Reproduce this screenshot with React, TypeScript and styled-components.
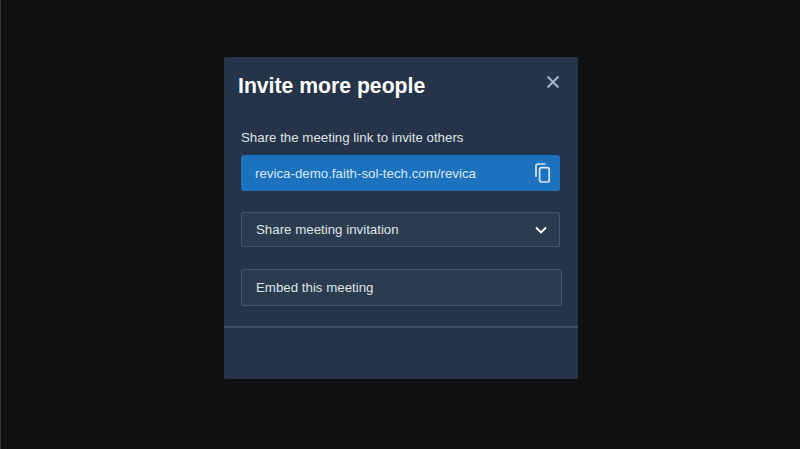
import React from "react";
import styled, { createGlobalStyle } from "styled-components";

const Global = createGlobalStyle`
  html, body { margin: 0; padding: 0; height: 100%; background: #111111; }
  #root { height: 100%; }
`;

const Page = styled.div`
  box-sizing: border-box;
  width: 800px;
  height: 449px;
  overflow: hidden;
  padding: 57px 0 0 223px;
  background: #111111;
  border-left: 1px solid #3a3a3a;
  font-family: "Liberation Sans", Arial, sans-serif;
`;

const Dialog = styled.div`
  box-sizing: border-box;
  width: 354px;
  height: 322px;
  background: #253448;
  border-radius: 2px;
  display: flex;
  flex-direction: column;
`;

const Header = styled.div`
  display: flex;
  justify-content: space-between;
  align-items: flex-start;
  height: 73px;
  padding: 16px 18px 0 14px;
  box-sizing: border-box;
`;

const Title = styled.h1`
  margin: 0;
  font-size: 21.2px;
  line-height: 26px;
  font-weight: 700;
  color: #ffffff;
`;

const Close = styled.button`
  display: flex;
  border: 0;
  padding: 0;
  background: none;
  color: #a5b3c6;
`;

const Body = styled.div`
  flex: 1;
  display: flex;
  flex-direction: column;
  padding: 0 16px 0 17px;
`;

const Label = styled.div`
  font-size: 13.3px;
  line-height: 16px;
  color: #dfe3e8;
  margin-bottom: 9px;
`;

const LinkBox = styled.div`
  box-sizing: border-box;
  height: 36px;
  width: 319px;
  display: flex;
  align-items: center;
  justify-content: space-between;
  padding: 0 9px 0 14px;
  background: #1c72bd;
  border-radius: 3px;
  font-size: 13.3px;
  color: #d9e7f4;
`;

const Row = styled.div<{ $w: number; $h: number; $mt: number }>`
  box-sizing: border-box;
  width: ${(p) => p.$w}px;
  height: ${(p) => p.$h}px;
  margin-top: ${(p) => p.$mt}px;
  display: flex;
  align-items: center;
  justify-content: space-between;
  padding: 0 12px 0 14px;
  background: #2b3c4e;
  border: 1px solid #43566a;
  border-radius: 2px;
  font-size: 13.3px;
  color: #dfe3e8;
`;

const Footer = styled.div`
  height: 53px;
  box-sizing: border-box;
  border-top: 2px solid #3e5062;
`;

export default function App() {
  return (
    <>
      <Global />
      <Page>
        <Dialog>
          <Header>
            <Title>Invite more people</Title>
            <Close aria-label="Close">
              <svg width="14" height="18" viewBox="0 0 14 18" fill="none" stroke="currentColor" strokeWidth="2">
                <path d="M1.5 3.5 L12.5 14.5 M12.5 3.5 L1.5 14.5" />
              </svg>
            </Close>
          </Header>
          <Body>
            <Label>Share the meeting link to invite others</Label>
            <LinkBox>
              <span>revica-demo.faith-sol-tech.com/revica</span>
              <svg width="16" height="20" viewBox="0 0 16 20" fill="none" stroke="#d9e7f4" strokeWidth="1.7">
                <path d="M10.5 1 H3 Q1 1 1 3 V14" />
                <rect x="4.6" y="4.6" width="9.6" height="14.4" rx="1.8" />
              </svg>
            </LinkBox>
            <Row $w={319} $h={35} $mt={21}>
              <span>Share meeting invitation</span>
              <svg width="12" height="8" viewBox="0 0 12 8" fill="none" stroke="#ffffff" strokeWidth="1.8">
                <path d="M1 1.5 L6 6.5 L11 1.5" />
              </svg>
            </Row>
            <Row $w={321} $h={37} $mt={22}>
              <span>Embed this meeting</span>
            </Row>
          </Body>
          <Footer />
        </Dialog>
      </Page>
    </>
  );
}
